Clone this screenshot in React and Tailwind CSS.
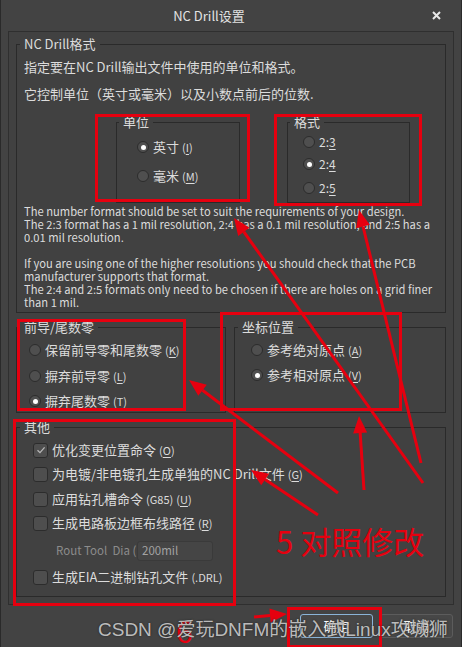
import React from "react";

const RED = "#e6000f";

function Radio({ checked }) {
  return (
    <span className="flex h-[12px] w-[12px] shrink-0 items-center justify-center rounded-full border border-[#2c2c2c] bg-[#4f4f4f]">
      {checked && <span className="h-[5px] w-[5px] rounded-full bg-white" />}
    </span>
  );
}

function Check({ checked }) {
  return (
    <span className="flex h-[15px] w-[15px] shrink-0 items-center justify-center rounded-[3px] border border-[#2c2c2c] bg-[#4e4e4e]">
      {checked && (
        <svg width="10" height="10" viewBox="0 0 10 10">
          <path d="M1.5 5.2 L4 7.6 L8.6 2.4" fill="none" stroke="#b8b8b8" strokeWidth="1.3" />
        </svg>
      )}
    </span>
  );
}

function Key({ k }) {
  return (
    <span className="ml-[3px] text-[11px]">
      (<u className="underline-offset-2">{k}</u>)
    </span>
  );
}

function Group({ title, className = "", children }) {
  return (
    <fieldset className={"border border-[#2a2a2a] " + className}>
      <legend className="ml-[3px] px-[4px] text-[13px] leading-[16px]">{title}</legend>
      {children}
    </fieldset>
  );
}

// red arrow: line from tail to tip + filled head
function Arrow({ from, to }) {
  const [x0, y0] = from;
  const [x1, y1] = to;
  const dx = x1 - x0;
  const dy = y1 - y0;
  const len = Math.hypot(dx, dy);
  const ux = dx / len;
  const uy = dy / len;
  const L = 17;
  const W = 7;
  const bx = x1 - ux * L;
  const by = y1 - uy * L;
  const pts = `${x1},${y1} ${bx - uy * W},${by + ux * W} ${bx + uy * W},${by - ux * W}`;
  return (
    <g>
      <line x1={x0} y1={y0} x2={bx} y2={by} stroke={RED} strokeWidth="3" />
      <polygon points={pts} fill={RED} />
    </g>
  );
}

export default function App() {
  return (
    <div className="relative h-[647px] w-[462px] overflow-hidden border-x border-[#2a2a2a] bg-[#434343] font-['Noto_Sans_CJK_SC','Noto_Sans',sans-serif] text-[#dcdcdc]">
      {/* title bar */}
      <div className="flex h-[31px] items-center">
        <div className="w-[416px] text-center text-[13px] text-[#e2e2e2]">NC Drill设置</div>
        <svg className="ml-[15px]" width="9" height="9" viewBox="0 0 9 9">
          <path d="M1 1 L8 8 M8 1 L1 8" stroke="#e8e8e8" strokeWidth="2" />
        </svg>
      </div>

      {/* body panel */}
      <div className="mx-[7px] h-[574px] border border-[#2f2f2f] bg-[#414141] px-[7px] pt-[4px]">
        <Group title="NC Drill格式" className="pb-[3px]">
          <div className="mt-[5px] pl-[7px] text-[13px] leading-[20px]">
            指定要在NC Drill输出文件中使用的单位和格式。
          </div>
          <div className="mt-[7px] pl-[7px] text-[13px] leading-[20px]">
            它控制单位（英寸或毫米）以及小数点前后的位数.
          </div>

          <div className="mt-[10px] flex">
            <fieldset className="ml-[99px] h-[89px] w-[124px] border border-[#2a2a2a]">
              <legend className="ml-[2px] px-[4px] text-[13px] leading-[16px]">单位</legend>
              <div className="mt-[7px] flex h-[20px] items-center gap-[4px] pl-[20px] text-[13px]">
                <Radio checked />
                <span>
                  英寸
                  <Key k="I" />
                </span>
              </div>
              <div className="mt-[9px] flex h-[20px] items-center gap-[4px] pl-[20px] text-[13px]">
                <Radio />
                <span>
                  毫米
                  <Key k="M" />
                </span>
              </div>
            </fieldset>
            <fieldset className="ml-[47px] h-[89px] w-[123px] border border-[#2a2a2a]">
              <legend className="ml-[2px] px-[4px] text-[13px] leading-[16px]">格式</legend>
              <div className="mt-[1px] flex h-[22px] items-center gap-[4px] pl-[15px] text-[12px]">
                <Radio />
                <span>
                  2:<u className="underline-offset-2">3</u>
                </span>
              </div>
              <div className="flex h-[22px] items-center gap-[4px] pl-[15px] text-[12px]">
                <Radio checked />
                <span>
                  2:<u className="underline-offset-2">4</u>
                </span>
              </div>
              <div className="mt-[2px] flex h-[22px] items-center gap-[4px] pl-[15px] text-[12px]">
                <Radio />
                <span>
                  2:<u className="underline-offset-2">5</u>
                </span>
              </div>
            </fieldset>
          </div>

          <p className="mt-[2px] pl-[7px] text-[11.2px] leading-[13px]">
            The number format should be set to suit the requirements of your design.
            <br />
            The 2:3 format has a 1 mil resolution, 2:4 has a 0.1 mil resolution, and 2:5 has a
            <br />
            0.01 mil resolution.
            <br />
            <br />
            If you are using one of the higher resolutions you should check that the PCB
            <br />
            manufacturer supports that format.
            <br />
            The 2:4 and 2:5 formats only need to be chosen if there are holes on a grid finer
            <br />
            than 1 mil.
          </p>
        </Group>

        <div className="mt-[6px] flex gap-[8px]">
          <Group title="前导/尾数零" className="h-[94px] w-[210px]">
            <div className="mt-[4px] flex h-[22px] items-center gap-[4px] pl-[12px] text-[13px]">
              <Radio />
              <span>
                保留前导零和尾数零
                <Key k="K" />
              </span>
            </div>
            <div className="mt-[4px] flex h-[22px] items-center gap-[4px] pl-[12px] text-[13px]">
              <Radio />
              <span>
                摒弃前导零
                <Key k="L" />
              </span>
            </div>
            <div className="mt-[3px] flex h-[22px] items-center gap-[4px] pl-[12px] text-[13px]">
              <Radio checked />
              <span>
                摒弃尾数零
                <Key k="T" />
              </span>
            </div>
          </Group>
          <Group title="坐标位置" className="h-[94px] flex-1">
            <div className="mt-[4px] flex h-[22px] items-center gap-[4px] pl-[16px] text-[13px]">
              <Radio />
              <span>
                参考绝对原点
                <Key k="A" />
              </span>
            </div>
            <div className="mt-[3px] flex h-[22px] items-center gap-[4px] pl-[16px] text-[13px]">
              <Radio checked />
              <span>
                参考相对原点
                <Key k="V" />
              </span>
            </div>
          </Group>
        </div>

        <Group title="其他" className="mt-[6px] pb-[8px]">
          <div className="mt-[4px] flex h-[22px] items-center gap-[4px] pl-[16px] text-[13px]">
            <Check checked />
            <span>
              优化变更位置命令
              <Key k="O" />
            </span>
          </div>
          <div className="mt-[2px] flex h-[22px] items-center gap-[4px] pl-[16px] text-[13px]">
            <Check />
            <span>
              为电镀/非电镀孔生成单独的NC Drill文件
              <Key k="G" />
            </span>
          </div>
          <div className="mt-[3px] flex h-[22px] items-center gap-[4px] pl-[16px] text-[13px]">
            <Check />
            <span>
              应用钻孔槽命令
              <span className="ml-[3px] text-[11px]">(G85)</span>
              <Key k="U" />
            </span>
          </div>
          <div className="mt-[2px] flex h-[22px] items-center gap-[4px] pl-[16px] text-[13px]">
            <Check />
            <span>
              生成电路板边框布线路径
              <Key k="R" />
            </span>
          </div>
          <div className="mt-[7px] flex h-[20px] items-center pl-[39px] text-[11.5px] text-[#8c8c8c]">
            <span className="w-[81px] whitespace-pre">Rout Tool  Dia (</span>
            <span className="flex h-[20px] w-[76px] items-center rounded-[3px] border border-[#3a3a3a] bg-[#454545] pl-[4px] text-[#a2a2a2]">
              200mil
            </span>
          </div>
          <div className="mt-[5px] flex h-[22px] items-center gap-[4px] pl-[16px] text-[13px]">
            <Check />
            <span>
              生成EIA二进制钻孔文件
              <span className="ml-[3px] text-[11px]">(.DRL)</span>
            </span>
          </div>
        </Group>
      </div>

      {/* buttons */}
      <div className="mt-[9px] flex justify-end gap-[7px] pr-[8px]">
        <button className="h-[24px] w-[73px] rounded-[3px] border border-[#8ab4d8] bg-[#474747] text-[13px] text-white">
          确定
        </button>
        <button className="h-[24px] w-[73px] rounded-[3px] border border-[#5c5c5c] bg-[#474747] text-[13px] text-white">
          取消
        </button>
      </div>

      {/* red annotations */}
      <svg className="pointer-events-none absolute left-0 top-0" width="462" height="647" viewBox="0 0 462 647">
        <g fill="none" stroke={RED} strokeWidth="3">
          <rect x="95.5" y="115.5" width="152" height="85" />
          <rect x="274.5" y="115.5" width="145" height="89" />
          <rect x="17.5" y="320.5" width="166" height="89" />
          <rect x="220.5" y="313.5" width="179" height="96" />
          <rect x="13.5" y="420.5" width="220" height="184" />
          <rect x="287.5" y="608.5" width="92" height="38" />
        </g>
        <Arrow from={[422, 483]} to={[233, 218]} />
        <Arrow from={[420, 463]} to={[358, 210]} />
        <Arrow from={[337, 493]} to={[188, 380]} />
        <Arrow from={[363, 490]} to={[358, 416]} />
        <Arrow from={[317, 515]} to={[250, 470]} />
        <Arrow from={[253, 617]} to={[286, 614]} />
      </svg>
      <div className="pointer-events-none absolute left-[275px] top-[519px] text-[31px] leading-[44px] text-[#e6000f]">
        5 对照修改
      </div>
      <div className="pointer-events-none absolute left-[175px] top-[608px] text-[30px] leading-[44px] text-[#e6000f]">
        6
      </div>
      <div className="pointer-events-none absolute left-[97px] top-[618px] font-['Liberation_Sans','Noto_Sans_CJK_SC',sans-serif] text-[19px] leading-[24px] text-[#cfcfcf]/90 [text-shadow:0_0_2px_#222]">
        CSDN @爱玩DNFM的嵌入式Linux攻城狮
      </div>
    </div>
  );
}
